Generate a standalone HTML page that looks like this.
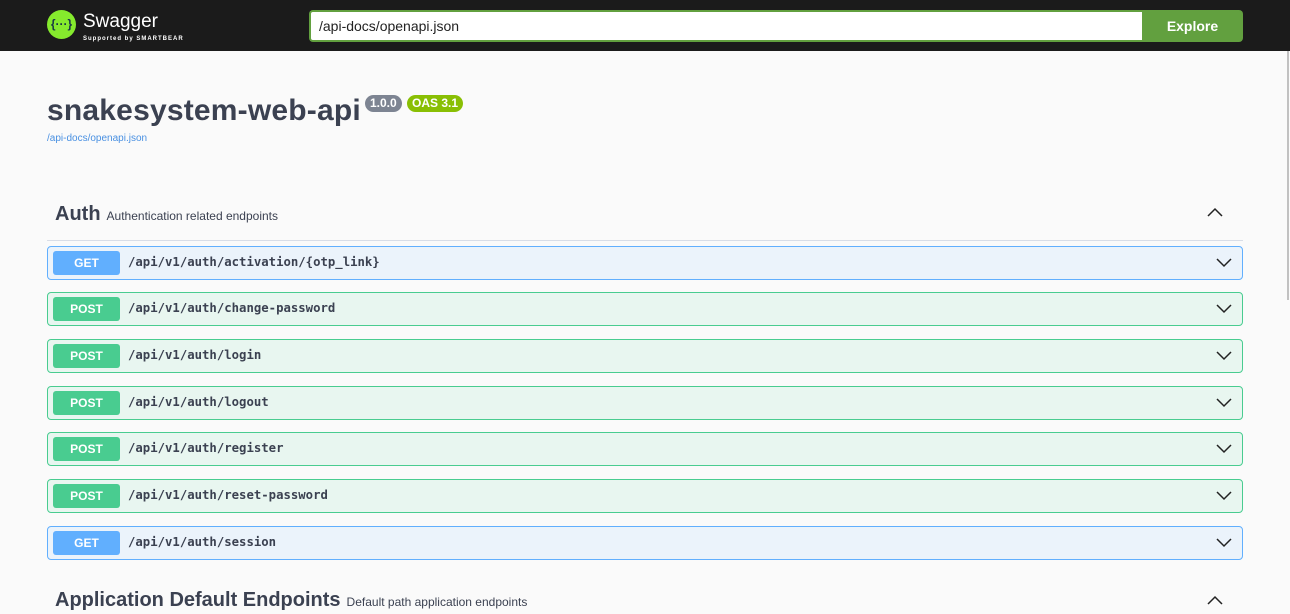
<!DOCTYPE html>
<html><head><meta charset="utf-8"><style>
*{box-sizing:border-box;margin:0;padding:0}
body{width:1290px;height:614px;overflow:hidden;background:#fafafa;font-family:"Liberation Sans",sans-serif;color:#3b4151;position:relative}
.top{position:absolute;left:0;top:0;width:1290px;height:51px;background:#1b1b1b}
.logo{position:absolute;left:47px;top:10px;width:29px;height:29px;border-radius:50%;background:#85ea2d;color:#173647;font-size:12px;font-weight:bold;text-align:center;line-height:29px}
.sw{position:absolute;left:83px;top:11px;color:#fff;font-size:19px}
.sb{position:absolute;left:83px;top:36px;color:#fff;font-size:6px;font-weight:bold;letter-spacing:1px}
.inp{position:absolute;left:309px;top:10px;width:834px;height:32px;background:#fff;border:2px solid #62a03f;border-right:none;border-radius:4px 0 0 4px;font-size:14px;padding:6px 8px;color:#222}
.btn{position:absolute;left:1142px;top:10px;width:101px;height:32px;background:#62a03f;border-radius:0 4px 4px 0;color:#fff;font-weight:bold;font-size:14px;text-align:center;line-height:32px}
.sc{position:absolute;left:1287px;top:51px;width:2px;height:249px;background:#c1c1c1}
h1{position:absolute;left:47px;top:94px;font-size:30px;font-weight:bold;color:#3b4151;letter-spacing:0.2px}
.v{position:absolute;top:95px;height:17px;border-radius:9px;color:#fff;font-size:12px;font-weight:bold;line-height:17px;padding:0 5px}
.url{position:absolute;left:47px;top:133px;font-size:10px;color:#4990e2}
.tag{position:absolute;left:55px;font-size:20px;color:#3b4151;font-weight:bold}
.tag small{font-size:12px;margin-left:6px;font-weight:normal}
.hr{position:absolute;left:47px;top:240px;width:1196px;height:1px;background:#d8dde7}
.op{position:absolute;left:47px;width:1196px;height:34px;border-radius:4px;border:1px solid}
.get{background:#ebf3fb;border-color:#61affe}
.post{background:#e8f6f0;border-color:#49cc90}
.m{position:absolute;left:5px;top:4px;width:67px;height:24px;border-radius:3px;color:#fff;font-weight:bold;font-size:12px;text-align:center;line-height:24px}
.get .m{background:#61affe}.post .m{background:#49cc90}
.p{position:absolute;left:80px;top:8px;font-family:"DejaVu Sans Mono","Liberation Mono",monospace;font-size:12.3px;font-weight:bold;color:#3b4151}
.ch{position:absolute;right:10px;top:9px}
</style></head><body>
<div class="top"><div class="logo">{···}</div><div class="sw">Swagger</div><div class="sb">Supported by SMARTBEAR</div>
<div class="inp">/api-docs/openapi.json</div><div class="btn">Explore</div></div>
<div class="sc"></div>
<h1>snakesystem-web-api</h1>
<span class="v" style="left:365px;background:#7d8492">1.0.0</span>
<span class="v" style="left:407px;background:#89bf04">OAS 3.1</span>
<div class="url">/api-docs/openapi.json</div>
<div class="tag" style="top:203px">Auth<small>Authentication related endpoints</small></div>
<svg style="position:absolute;left:1207px;top:207px" width="16" height="10"><path d="M1 9L8 2L15 9" fill="none" stroke="#222" stroke-width="1.5"/></svg>
<div class="hr"></div>
<div class="op get" style="top:246px"><div class="m">GET</div><div class="p">/api/v1/auth/activation/{otp_link}</div><svg class="ch" width="16" height="12"><path d="M1 3L8 10L15 3" fill="none" stroke="#222" stroke-width="1.5"/></svg></div>
<div class="op post" style="top:292px"><div class="m">POST</div><div class="p">/api/v1/auth/change-password</div><svg class="ch" width="16" height="12"><path d="M1 3L8 10L15 3" fill="none" stroke="#222" stroke-width="1.5"/></svg></div>
<div class="op post" style="top:339px"><div class="m">POST</div><div class="p">/api/v1/auth/login</div><svg class="ch" width="16" height="12"><path d="M1 3L8 10L15 3" fill="none" stroke="#222" stroke-width="1.5"/></svg></div>
<div class="op post" style="top:386px"><div class="m">POST</div><div class="p">/api/v1/auth/logout</div><svg class="ch" width="16" height="12"><path d="M1 3L8 10L15 3" fill="none" stroke="#222" stroke-width="1.5"/></svg></div>
<div class="op post" style="top:432px"><div class="m">POST</div><div class="p">/api/v1/auth/register</div><svg class="ch" width="16" height="12"><path d="M1 3L8 10L15 3" fill="none" stroke="#222" stroke-width="1.5"/></svg></div>
<div class="op post" style="top:479px"><div class="m">POST</div><div class="p">/api/v1/auth/reset-password</div><svg class="ch" width="16" height="12"><path d="M1 3L8 10L15 3" fill="none" stroke="#222" stroke-width="1.5"/></svg></div>
<div class="op get" style="top:526px"><div class="m">GET</div><div class="p">/api/v1/auth/session</div><svg class="ch" width="16" height="12"><path d="M1 3L8 10L15 3" fill="none" stroke="#222" stroke-width="1.5"/></svg></div>
<div class="tag" style="top:589px">Application Default Endpoints<small>Default path application endpoints</small></div>
<svg style="position:absolute;left:1207px;top:595px" width="16" height="10"><path d="M1 9L8 2L15 9" fill="none" stroke="#222" stroke-width="1.5"/></svg>
</body></html>
